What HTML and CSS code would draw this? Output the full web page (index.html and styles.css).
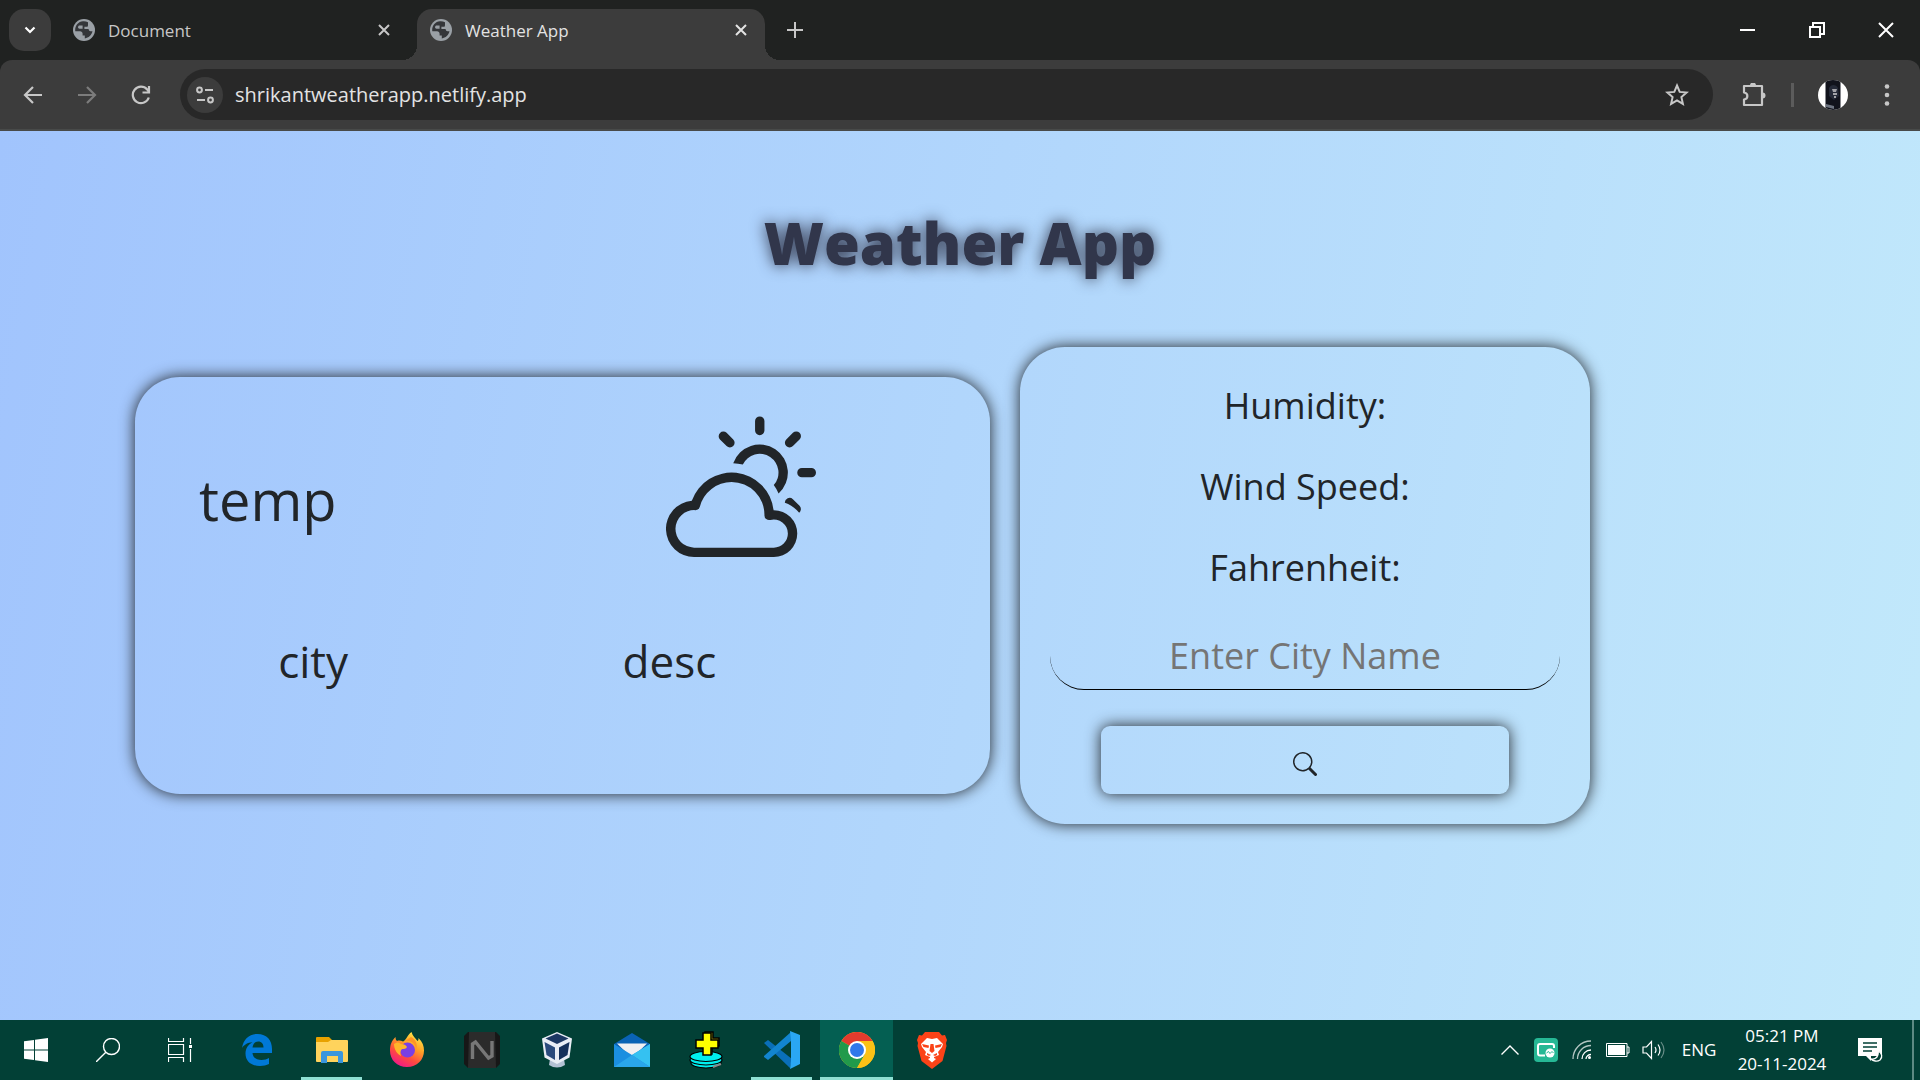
FILE: index.html
```html
<!DOCTYPE html>
<html lang="en">
<head>
<meta charset="utf-8">
<meta name="viewport" content="width=device-width, initial-scale=1">
<title>Weather App</title>
<link rel="stylesheet" href="styles.css">
</head>
<body>
<svg class="defs" aria-hidden="true">
  <symbol id="globe" viewBox="0 0 22 22">
    <circle cx="11" cy="11" r="11" fill="#9aa0a6"/>
    <path fill="#34363a" d="M10 2.2C5.4 2.500 2.200 6.400 2.200 11c0 .5 0 .9.1 1.300L7 12.300c1.500 0 2.600 1.100 2.600 2.500v1.700h2.200v2.900c3.900-.4 7-3.400 7.700-7.100l-1.900-.1c-1.400 0-2-1-2-2.200H11.400V7.800h2.400c1.100 0 1.200-1 1.200-2.100V3.200C13.500 2.400 12 2.100 10 2.200zM6 6.600h3.600v3.200H6.400C5 9.800 4.500 7.500 6 6.600z" fill-rule="evenodd"/>
  </symbol>
  <symbol id="cross" viewBox="0 0 12 12"><path d="M1 1l10 10M11 1L1 11" stroke="currentColor" stroke-width="2" fill="none"/></symbol>
</svg>

<header class="browser">
  <div class="tabstrip">
    <button class="tab-search" aria-label="Search tabs"><svg width="12" height="8" viewBox="0 0 12 8"><path d="M1.500 1.500L6 6l4.500-4.500" fill="none" stroke="currentColor" stroke-width="2.200"/></svg></button>
    <div class="tab">
      <svg class="favicon"><use href="#globe"/></svg>
      <span class="tab-title">Document</span>
      <button class="tab-close" aria-label="Close tab"><svg width="12" height="12"><use href="#cross"/></svg></button>
    </div>
    <div class="tab tab-active">
      <svg class="favicon"><use href="#globe"/></svg>
      <span class="tab-title">Weather App</span>
      <button class="tab-close" aria-label="Close tab"><svg width="12" height="12"><use href="#cross"/></svg></button>
    </div>
    <button class="new-tab" aria-label="New tab"><svg width="16" height="16" viewBox="0 0 16 16"><path d="M8 0v16M0 8h16" stroke="currentColor" stroke-width="2"/></svg></button>
    <div class="window-buttons">
      <button aria-label="Minimize"><svg width="16" height="16" viewBox="0 0 16 16"><path d="M0 8h15" stroke="#fff" stroke-width="2"/></svg></button>
      <button aria-label="Restore"><svg width="16" height="16" viewBox="0 0 16 16"><path d="M1 5h10v10H1zM4 5V1h11v11h-4" fill="none" stroke="#fff" stroke-width="2"/></svg></button>
      <button aria-label="Close"><svg width="16" height="16" viewBox="0 0 16 16"><path d="M1 1l14 14M15 1L1 15" stroke="#fff" stroke-width="2"/></svg></button>
    </div>
  </div>
  <div class="toolbar">
    <button class="tool" aria-label="Back"><svg width="20" height="20" viewBox="0 0 20 20"><path d="M19 10H2M10 2l-8 8 8 8" fill="none" stroke="currentColor" stroke-width="2.200"/></svg></button>
    <button class="tool tool-off" aria-label="Forward"><svg width="20" height="20" viewBox="0 0 20 20"><path d="M1 10h17M10 2l8 8-8 8" fill="none" stroke="currentColor" stroke-width="2.200"/></svg></button>
    <button class="tool" aria-label="Reload"><svg width="20" height="20" viewBox="0 0 20 20"><path d="M17.800 12.500A8.200 8.200 0 1 1 16.200 4.500L18 6.500M18 1v6.500h-6.500" fill="none" stroke="currentColor" stroke-width="2.200"/></svg></button>
    <div class="omnibox">
      <button class="site-info" aria-label="Site information"><svg width="18" height="18" viewBox="0 0 18 18" fill="none" stroke="currentColor" stroke-width="2"><circle cx="3.500" cy="4" r="2.400"/><path d="M9 4h8M1 14h8"/><circle cx="14.500" cy="14" r="2.400"/></svg></button>
      <input class="url" type="text" aria-label="Address" value="shrikantweatherapp.netlify.app">
      <button class="star" aria-label="Bookmark"><svg width="24" height="24" viewBox="0 0 24 24"><path d="M12 2.500l2.700 6.400 6.900.6-5.200 4.600 1.500 6.800L12 17.300l-5.900 3.600 1.500-6.800-5.200-4.600 6.900-.6z" fill="none" stroke="currentColor" stroke-width="2"/></svg></button>
    </div>
    <button class="extensions" aria-label="Extensions"><svg width="24" height="24" viewBox="0 0 24 24"><path d="M2 3h18v19H2v-5.500c4.500-.5 4.500-6.500 0-7z" fill="none" stroke="currentColor" stroke-width="2.200" stroke-linejoin="round"/><path d="M8 2.500a3 3 0 0 1 6 0zM20.500 9.500a3 3 0 0 1 0 6z" fill="currentColor"/></svg></button>
    <span class="divider"></span>
    <button class="avatar" aria-label="Profile"><svg width="30" height="30" viewBox="0 0 30 30"><clipPath id="face"><circle cx="15" cy="15" r="15"/></clipPath><g clip-path="url(#face)"><path fill="#fff" d="M0 0h30v30H0z"/><path fill="#11131c" d="M7.500 0h15v30h-15z"/><path fill="#252a38" d="M11 8c2-4 7-4 9 0l1 8-5 4-5-4z"/><path fill="#a3a3a8" d="M14 9h5l-1 3h-3zM15 13h4v2h-4zM16 16h2v2h-2z"/><path fill="#6d7481" d="M8 24l8 2v3l-8-2z"/></g></svg></button>
    <button class="menu" aria-label="Menu"><svg width="6" height="22" viewBox="0 0 6 22" fill="currentColor"><circle cx="3" cy="2.500" r="2.300"/><circle cx="3" cy="11" r="2.300"/><circle cx="3" cy="19.500" r="2.300"/></svg></button>
  </div>
</header>

<main class="page">
  <h1 class="title">Weather App</h1>
  <div class="cards">
    <section class="card current">
      <div class="current-top">
        <p class="temp">temp</p>
        <svg class="weather-icon" viewBox="0 0 16 16" fill="currentColor"><path d="M7 8a3.500 3.500 0 0 1 3.500 3.555.5.5 0 0 0 .624.492A1.503 1.503 0 0 1 13 13.500a1.500 1.500 0 0 1-1.500 1.500H3a2 2 0 1 1 .1-3.998.5.5 0 0 0 .51-.375A3.502 3.502 0 0 1 7 8zm4.473 3a4.500 4.500 0 0 0-8.720-.99A3 3 0 0 0 3 16h8.500a2.500 2.500 0 0 0 0-5h-.027z"/><path d="M10.500 1.500a.5.5 0 0 0-1 0v1a.5.5 0 0 0 1 0v-1zm3.743 1.964a.5.5 0 1 0-.707-.707l-.708.707a.5.5 0 0 0 .708.708l.707-.708zm-7.779-.707a.5.5 0 0 0-.707.707l.707.708a.5.5 0 1 0 .708-.708l-.708-.707zm1.734 3.374a2 2 0 1 1 3.296 2.198c.199.281.372.582.516.898a3 3 0 1 0-4.840-3.225c.352.011.696.055 1.028.129zm4.484 4.074c.6.215 1.125.59 1.522 1.072a.5.5 0 0 0 .039-.742l-.707-.707a.5.5 0 0 0-.854.377zM14.500 6.500a.5.5 0 0 0 0 1h1a.5.5 0 0 0 0-1h-1z"/></svg>
      </div>
      <div class="current-bottom">
        <p class="place">city</p>
        <p class="place">desc</p>
      </div>
    </section>
    <form class="card details">
      <p class="reading">Humidity:</p>
      <p class="reading">Wind Speed:</p>
      <p class="reading">Fahrenheit:</p>
      <input class="city-input" type="text" aria-label="City name" placeholder="Enter City Name">
      <button class="search" type="button" aria-label="Search"><svg width="24" height="24" viewBox="0 0 16 16" fill="currentColor"><path d="M11.742 10.344a6.500 6.500 0 1 0-1.397 1.398h-.001c.03.04.062.078.098.115l3.850 3.850a1 1 0 0 0 1.415-1.414l-3.850-3.850a1.007 1.007 0 0 0-.115-.1zM12 6.500a5.500 5.500 0 1 1-11 0 5.500 5.500 0 0 1 11 0z"/></svg></button>
    </form>
  </div>
</main>

<footer class="taskbar">
  <button class="sys" aria-label="Start"><svg width="24" height="24" viewBox="0 0 24 24" fill="#fff"><path d="M0 3.300l10-1.400V11.500H0zM11 1.700L24 0v11.500H11zM0 12.500h10v9.600L0 20.700zM11 12.500h13V24l-13-1.700z"/></svg></button>
  <button class="sys" aria-label="Search"><svg width="24" height="24" viewBox="0 0 24 24" fill="none" stroke="#fff" stroke-width="1.400"><circle cx="15.500" cy="8.500" r="8"/><path d="M9.800 14.200L0 24"/></svg></button>
  <button class="sys" aria-label="Task view"><svg width="24" height="24" viewBox="0 0 24 24" fill="none" stroke="#fff" stroke-width="1.200"><path d="M.5 0v3.500h15V0M.5 6.500h15v10H.5zM.5 24v-4.500h15V24M22.500 0v6M22.500 11v13"/><path d="M21 7h3v3h-3z" fill="#fff" stroke="none"/></svg></button>
  <nav class="apps" aria-label="Running applications">
    <button class="app" aria-label="Edge"><svg width="32" height="34" viewBox="0 0 32 34"><path fill="#0078d7" d="M1 15C2.500 6 8.500 1 16.500 1 26 1 31 7.500 31 16v4H11.500c.3 4.500 4 7 9 7 3 0 5.500-.8 7.500-2v6c-2.500 1.300-5.500 2-9 2C10 33 4.500 28 4.500 20.500c0-5 2.700-9 7-11.200C6.500 9.500 3 12 1 15zm10.500-.5h11c0-3.500-1.800-6-5.300-6-3.200 0-5.200 2.500-5.700 6z"/></svg></button>
    <button class="app app-open" aria-label="File Explorer"><svg width="32" height="26" viewBox="0 0 32 26"><path fill="#e8a200" d="M0 1q0-1 1-1h12l3 3-2 4H0z"/><path fill="#ffd35c" d="M0 5h12l3-2h16q1 0 1 1v20q0 1-1 1H1q-1 0-1-1z"/><path fill="#3a96dd" d="M5 26V16q0-2 2-2h18q2 0 2 2v10h-5v-7H11v7z"/></svg></button>
    <button class="app" aria-label="Firefox"><svg width="34" height="36" viewBox="0 0 34 36"><defs><linearGradient id="fx" x1=".85" y1="0" x2=".3" y2="1"><stop offset="0" stop-color="#fff44f"/><stop offset=".4" stop-color="#ffa126"/><stop offset=".7" stop-color="#ff4b3e"/><stop offset="1" stop-color="#f0188a"/></linearGradient></defs><path fill="url(#fx)" d="M21.500 0c1 4 4 6 6 9 1-.5 1-2 1-3 4 4 5.500 8 5.500 12.500C34 28 27 35 17 35S0 28 0 18.500C0 13 1.500 9 5.500 5c0 2 .5 3 1.500 4 2-.8 4-.5 6 .5 3-1 4-6 8.500-9.500z"/><circle cx="17.500" cy="18" r="7.500" fill="#7a3fe4"/><path fill="#ffb52a" d="M4 12c3-2 5-2 7 0 3 0 5 1 6 3-1 2-3 2-5 2-2 2-2 4-1 7C7 22 4 17 4 12z"/><path fill="#ff9526" d="M15 9c6-1 11 3 11 9 2-5 0-11-5-13z"/></svg></button>
    <button class="app" aria-label="Notes"><svg width="36" height="36" viewBox="0 0 36 36"><path fill="#171717" d="M4 0h28l4 4v28l-4 4H4l-4-4V4z"/><path fill="#2b2b2b" d="M5 0h26l1 36H4z"/><path d="M8.500 27V12l3-2 13 16 3.500-2V9" fill="none" stroke="#777" stroke-width="3.400"/></svg></button>
    <button class="app" aria-label="VirtualBox"><svg width="30" height="36" viewBox="0 0 30 36"><path fill="#b4c1d4" d="M8 27h14l1 6q-8 5-16 0z"/><path fill="#e9edf5" d="M15 0l15 6.500-2.500 19L15 32 2.500 25.500 0 6.500z"/><path fill="#1c3763" d="M15 1.500L26.500 6.500 15 12 3.500 6.500z"/><path fill="#2a4a7c" d="M2.500 10L13 15.500V28l-8.500-5z"/><path fill="#15305a" d="M27.500 10L17 15.500V28l8.500-5z"/></svg></button>
    <button class="app" aria-label="Mail"><svg width="36" height="34" viewBox="0 0 36 34"><path fill="#0a63b5" d="M0 11L18 0l18 11v6H0z"/><path fill="#f0f0f2" d="M3 10.500h30L18 25z"/><path fill="#1b8fe0" d="M0 11l18 11L36 11v23H0z"/><path fill="#35c1f1" d="M36 11L18 22l18 12z"/><path fill="#2aa6ea" d="M18 22l18 12H0z"/></svg></button>
    <button class="app" aria-label="Disk tool"><svg width="36" height="38" viewBox="0 0 36 38"><g stroke="#000" stroke-width="1.200"><ellipse cx="17" cy="32" rx="15" ry="5" fill="#0ee"/><ellipse cx="17" cy="29" rx="16" ry="5" fill="#0ee"/><ellipse cx="17" cy="25.500" rx="16" ry="5" fill="#0ee"/><path fill="#b8a800" stroke-width="1.500" d="M16 1h8v6h6v8h-7v8h-8z"/><path fill="#ff0" stroke-width="1.500" d="M14 2h8v7h7v8h-7v7h-8v-7H7V9h7z"/></g><path d="M24 36l8-3" stroke="#888" stroke-width="2"/></svg></button>
    <button class="app app-open" aria-label="Visual Studio Code"><svg width="36" height="38" viewBox="0 0 36 38"><path fill="#0a6fb8" d="M0 12l4-3 24 19-2 9z"/><path fill="#1285cf" d="M0 26l4 3L27 10V1L0 25z"/><path fill="#2aa7f4" d="M26 0l10 4v29l-10 5 1-8V9z"/></svg></button>
    <button class="app app-open app-current" aria-label="Chrome"><svg width="36" height="36" viewBox="0 0 36 36"><circle cx="18" cy="18" r="18" fill="#fbc116"/><path fill="#e33b2e" d="M18 18L2.400 9A18 18 0 0 1 33.600 9z"/><path fill="#219a4b" d="M2.400 9A18 18 0 0 0 18 36l7.800-13.500L18 18z"/><path fill="#fbc116" d="M18 9h15.600A18 18 0 0 1 18 36l7.800-13.500z"/><circle cx="18" cy="18" r="9" fill="#fff"/><circle cx="18" cy="18" r="7" fill="#3178ea"/></svg></button>
    <button class="app" aria-label="Brave"><svg width="30" height="37" viewBox="0 0 30 37"><path fill="#fb4318" d="M8 0h14l3 3.500 3-.5 2 5-1 3 .5 3-4 15L15 37 4.500 29 .5 14 1 11 0 8l2-5 3 .5z"/><path fill="#fff" d="M10 6l5 1 5-1 6 6-1 3-4 5 1 3-5 2v2l-2 1-2-1v-2l-5-2 1-3-4-5-1-3z"/><path fill="#fb4318" d="M5 12l7 1.500-.5 2.500-5-1zM25 12l-7 1.500.5 2.500 5-1zM13.500 12h3l1 7-2.500 2-2.500-2zM10 21l4 2-2 1-2-1zM20 21l-4 2 2 1 2-1z"/><path fill="#fff" d="M11 27l4-2 4 2-4 3.500z"/></svg></button>
  </nav>
  <div class="tray">
    <button aria-label="Show hidden icons"><svg width="18" height="10" viewBox="0 0 18 10"><path d="M.5 9.500L9 1l8.500 8.500" fill="none" stroke="#fff" stroke-width="1.400"/></svg></button>
    <button aria-label="Screen capture"><svg width="24" height="24" viewBox="0 0 24 24"><rect width="24" height="24" rx="4" fill="#26b895"/><path d="M11 17.500H6q-2 0-2-2V8q0-2 2-2h12q2 0 2 2v2" fill="none" stroke="#fff" stroke-width="2"/><circle cx="16" cy="15" r="4.500" fill="#fff"/><path d="M12.500 15l2-1.500 1.500 2 2-2 1.500 1.500" fill="none" stroke="#26b895"/></svg></button>
    <button aria-label="Network"><svg width="20" height="20" viewBox="0 0 20 20" fill="none" stroke="#fff" stroke-width="1.300"><path d="M1 19C1 9 9 1 19 1M5.500 19C5.500 11.500 11.500 5.500 19 5.500" opacity=".7"/><path d="M10 19c0-5 4-9 9-9M14 19c0-2.500 2.500-4.500 5-4.500"/><circle cx="17.500" cy="17.500" r="1.500" fill="#fff" stroke="none"/></svg></button>
    <button aria-label="Battery"><svg width="24" height="14" viewBox="0 0 24 14"><path d="M.5.5h20.500v13H.5zM21 4h2v6h-2" fill="none" stroke="#fff"/><path d="M2 2h17v10H2z" fill="#fff"/></svg></button>
    <button aria-label="Volume"><svg width="24" height="20" viewBox="0 0 24 20" fill="none" stroke="#fff" stroke-width="1.200"><path d="M1 7v6h3.500l5 5.500V1.500L4.500 7zM13 7q2 3 0 6M16 4.500q4 5.500 0 11"/><path d="M19 2q6 8 0 16" opacity=".4"/></svg></button>
    <button class="lang">ENG</button>
    <button class="clock"><span>05:21 PM</span><span>20-11-2024</span></button>
    <button class="notify" aria-label="Notifications"><svg width="26" height="26" viewBox="0 0 26 26"><path fill="#fff" d="M0 1h24v18H13v5l-5-5H0z"/><path d="M5 6h14M5 10h14M5 14h9" stroke="#024036" stroke-width="1.300"/><path d="M20 14c4 2 5 6 2 9-3 2-7 1-9-1 5 1 8-3 7-8z" fill="#024036" stroke="#fff" stroke-width="1.300"/></svg></button>
    <button class="show-desktop" aria-label="Show desktop"></button>
  </div>
</footer>
</body>
</html>
```
FILE: styles.css
```css
* { box-sizing: border-box; }

body {
  margin: 0;
  min-height: 100vh;
  display: flex;
  flex-direction: column;
  font-family: "Open Sans", "Noto Sans", sans-serif;
  color: #212529;
}

button, input {
  margin: 0;
  padding: 0;
  border: 0;
  background: none;
  color: inherit;
  font: inherit;
}

button {
  display: flex;
  align-items: center;
  justify-content: center;
}

svg { display: block; flex: none; }
p, h1 { margin: 0; }
.defs { position: absolute; width: 0; height: 0; }

/* Browser frame */
.browser { background: #202221; color: #c7c7c7; }

.tabstrip {
  display: flex;
  align-items: flex-start;
  height: 60px;
  padding: 9px 0 0 9px;
}

.tab-search {
  width: 42px;
  height: 42px;
  border-radius: 15px;
  background: #3c3c3c;
  color: #fff;
}

.tab {
  display: flex;
  align-items: center;
  width: 348px;
  height: 51px;
  margin-left: 9px;
  padding: 0 18px 9px 13px;
  font-size: 17px;
  line-height: 24px;
}

.tab-active {
  position: relative;
  border-radius: 15px 15px 0 0;
  background: #3c3c3c;
  color: #e3e3e3;
}

/* Flared feet of the active tab */
.tab-active::before,
.tab-active::after {
  content: "";
  position: absolute;
  bottom: 0;
  width: 15px;
  height: 15px;
}
.tab-active::before { right: 100%; background: radial-gradient(circle at 0 0, transparent 15px, #3c3c3c 15px); }
.tab-active::after { left: 100%; background: radial-gradient(circle at 100% 0, transparent 15px, #3c3c3c 15px); }

.favicon { width: 22px; height: 22px; }
.tab-title { flex: 1; margin-left: 13px; padding-top: 2px; }
.new-tab { width: 42px; height: 42px; margin-left: 9px; }

.window-buttons { display: flex; margin-left: auto; }
.window-buttons button { width: 69px; height: 42px; }

.toolbar {
  display: flex;
  align-items: center;
  height: 71px;
  padding: 0 12px 0 6px;
  border-bottom: 2px solid #484a49;
  border-radius: 12px 12px 0 0;
  background: #3c3c3c;
}

.tool { width: 54px; height: 42px; }
.tool-off { color: #7c7c7c; }

.omnibox {
  display: flex;
  flex: 1;
  align-items: center;
  height: 51px;
  margin-left: 12px;
  padding: 0 24px 0 7px;
  border-radius: 26px;
  background: #282828;
}

.site-info {
  width: 36px;
  height: 36px;
  border-radius: 50%;
  background: #3c3c3c;
}

.url {
  flex: 1;
  min-width: 0;
  margin-left: 12px;
  font-size: 20px;
  color: #e3e3e3;
}

.extensions { width: 42px; height: 42px; margin-left: 20px; }
.divider { width: 3px; height: 24px; margin-left: 16px; background: #5c5c5c; }
.avatar { width: 30px; height: 30px; margin-left: 24px; }
.menu { width: 42px; height: 42px; margin-left: 18px; }

/* Weather page */
.page {
  flex: 1;
  padding: 72px 330px 60px 135px;
  background: linear-gradient(100deg, #a1c4fd, #c2e9fb);
}

.title {
  margin-right: -195px;
  text-align: center;
  font-size: 58px;
  line-height: 80px;
  font-weight: 800;
  color: #31364b;
  text-shadow: 0 0 15px #31364b;
}

.cards {
  display: grid;
  grid-template-columns: 3fr 2fr;
  align-items: center;
  gap: 30px;
  margin-top: 64px;
}

.card {
  border-radius: 45px;
  box-shadow: 0 0 15px #212529;
}

.current { padding: 30px 0 98px; }

.current-top {
  display: grid;
  grid-template-columns: 5fr 7fr;
  align-items: end;
}

.current-bottom {
  display: grid;
  grid-template-columns: 5fr 5fr 2fr;
  margin-top: 69px;
}

.temp { padding-left: 64px; font-size: 56px; line-height: 116px; }
.weather-icon { width: 150px; height: 150px; justify-self: center; }
.place { text-align: center; font-size: 44px; line-height: 70px; }

.details {
  display: flex;
  flex-direction: column;
  align-items: center;
  gap: 24px;
  padding: 30px;
}

.reading { font-size: 36px; line-height: 57px; }

.city-input {
  width: 100%;
  height: 68px;
  margin-top: 2px;
  border-bottom: 1px solid #000;
  border-radius: 34px;
  text-align: center;
  font-size: 36px;
}
.city-input::placeholder { color: #757575; opacity: 1; }

.search {
  width: 80%;
  height: 68px;
  margin-top: 12px;
  padding-top: 8px;
  border-radius: 9px;
  box-shadow: 0 0 15px #212529;
}

/* Taskbar */
.taskbar {
  display: flex;
  height: 60px;
  background: #024036;
  color: #fff;
}

.sys { width: 72px; }
.apps { display: flex; gap: 2px; margin-left: 4px; }
.app { width: 73px; position: relative; }
.app-current { background: #045f52; }

.app-open::after {
  content: "";
  position: absolute;
  left: 6px;
  right: 6px;
  bottom: 0;
  height: 3px;
  background: #8fe0d3;
}
.app-current::after { left: 0; right: 0; }

.tray { display: flex; margin-left: auto; font-size: 17px; line-height: 28px; }
.tray button { width: 36px; }
.tray .lang { width: 54px; }
.tray .clock { flex-direction: column; width: 112px; }
.tray .notify { width: 65px; }
.tray .show-desktop { width: 8px; margin-left: 9px; border-left: 2px solid #5d8a83; }
```
